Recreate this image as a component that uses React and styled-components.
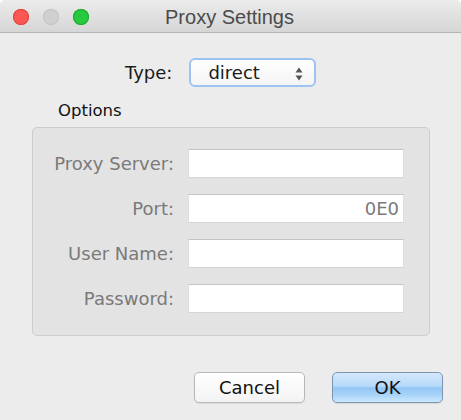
import React from "react";
import styled, { createGlobalStyle } from "styled-components";

const GlobalStyle = createGlobalStyle`
  html, body {
    margin: 0;
    padding: 0;
    background: #ffffff;
  }
  * {
    box-sizing: border-box;
  }
`;

const Window = styled.div`
  width: 461px;
  height: 420px;
  display: flex;
  flex-direction: column;
  background: #ececec;
  border-radius: 5px 5px 0 0;
  overflow: hidden;
  font-family: "DejaVu Sans", "Liberation Sans", sans-serif;
  font-size: 18px;
  color: #1a1a1a;
`;

const TitleBar = styled.div`
  position: relative;
  height: 33px;
  flex: none;
  display: flex;
  align-items: center;
  justify-content: center;
  background: linear-gradient(#ebebeb, #d6d6d6);
  border-bottom: 1px solid #b3b3b3;
`;

const Lights = styled.div`
  position: absolute;
  left: 13px;
  top: 9px;
  display: flex;
  gap: 14px;
`;

const Light = styled.span`
  width: 16px;
  height: 16px;
  border-radius: 50%;
  background: ${(p) => p.color};
  box-shadow: inset 0 0 0 1px ${(p) => p.ring};
`;

const Title = styled.div`
  font-family: "Liberation Sans", Arial, sans-serif;
  font-size: 20px;
  color: #4b4b4b;
  margin: 2px 0 0 -2px;
`;

const Content = styled.div`
  flex: 1;
  display: flex;
  flex-direction: column;
  padding: 0 31px 0 32px;
`;

const TypeRow = styled.div`
  display: flex;
  align-items: center;
  gap: 17px;
  margin: 24px 0 0 93px;
  height: 30px;
`;

const Popup = styled.div`
  position: relative;
  width: 127px;
  height: 29px;
  border: 2px solid #9cc4f2;
  border-radius: 6px;
  background: linear-gradient(#ffffff, #f4f4f4);
  display: flex;
  align-items: center;
  padding-left: 17px;
`;

const Arrows = styled.svg`
  position: absolute;
  right: 11px;
  top: 7px;
`;

const OptionsLabel = styled.div`
  margin: 13px 0 0 26px;
  font-size: 16.5px;
  line-height: 22px;
  color: #111;
`;

const GroupBox = styled.div`
  margin-top: 5px;
  width: 398px;
  height: 209px;
  border: 1px solid #cdcdcd;
  border-radius: 5px;
  background: #e3e3e3;
  display: grid;
  grid-template-columns: 141px 216px;
  grid-auto-rows: 29px;
  column-gap: 14px;
  row-gap: 16px;
  padding: 21px 0 0 0;
  align-items: center;
`;

const FieldLabel = styled.div`
  text-align: right;
  color: #7a7a7a;
  line-height: 29px;
`;

const Field = styled.div`
  height: 29px;
  background: #ffffff;
  border-top: 1px solid #c4c4c4;
  border-bottom: 1px solid #d4d4d4;
  border-left: 1px solid #dedede;
  border-right: 1px solid #dedede;
  display: flex;
  align-items: center;
  justify-content: flex-end;
  padding-right: 4px;
  color: #7a7a7a;
`;

const ButtonRow = styled.div`
  display: flex;
  justify-content: flex-end;
  gap: 27px;
  margin: 36px -13px 0 0;
`;

const Button = styled.div`
  width: 111px;
  height: 31px;
  border-radius: 5px;
  display: flex;
  align-items: center;
  justify-content: center;
  color: #111;
  border: 1px solid ${(p) => (p.primary ? "#7d95b3" : "#b8b8b8")};
  background: ${(p) =>
    p.primary
      ? "linear-gradient(#d3e8fc 0%, #b7d9f9 45%, #92c6f4 52%, #a8d3f8 75%, #cbe8fe 100%)"
      : "linear-gradient(#ffffff, #f3f3f3)"};
  box-shadow: 0 1px 1px rgba(0, 0, 0, 0.08);
`;

const fields = [
  { label: "Proxy Server:", value: "" },
  { label: "Port:", value: "0E0" },
  { label: "User Name:", value: "" },
  { label: "Password:", value: "" },
];

export default function App() {
  return (
    <>
      <GlobalStyle />
      <Window>
        <TitleBar>
          <Lights>
            <Light color="#fc5753" ring="#e0443e" />
            <Light color="#d0d0d0" ring="#c4c4c4" />
            <Light color="#27c93f" ring="#1aab29" />
          </Lights>
          <Title>Proxy Settings</Title>
        </TitleBar>
        <Content>
          <TypeRow>
            <span>Type:</span>
            <Popup>
              direct
              <Arrows width="8" height="14" viewBox="0 0 8 14">
                <path d="M4 0.5 L7.5 5.5 L0.5 5.5 Z" fill="#555" />
                <path d="M4 13.5 L7.5 8.5 L0.5 8.5 Z" fill="#555" />
              </Arrows>
            </Popup>
          </TypeRow>
          <OptionsLabel>Options</OptionsLabel>
          <GroupBox>
            {fields.map((f) => (
              <React.Fragment key={f.label}>
                <FieldLabel>{f.label}</FieldLabel>
                <Field>{f.value}</Field>
              </React.Fragment>
            ))}
          </GroupBox>
          <ButtonRow>
            <Button>Cancel</Button>
            <Button primary>OK</Button>
          </ButtonRow>
        </Content>
      </Window>
    </>
  );
}
